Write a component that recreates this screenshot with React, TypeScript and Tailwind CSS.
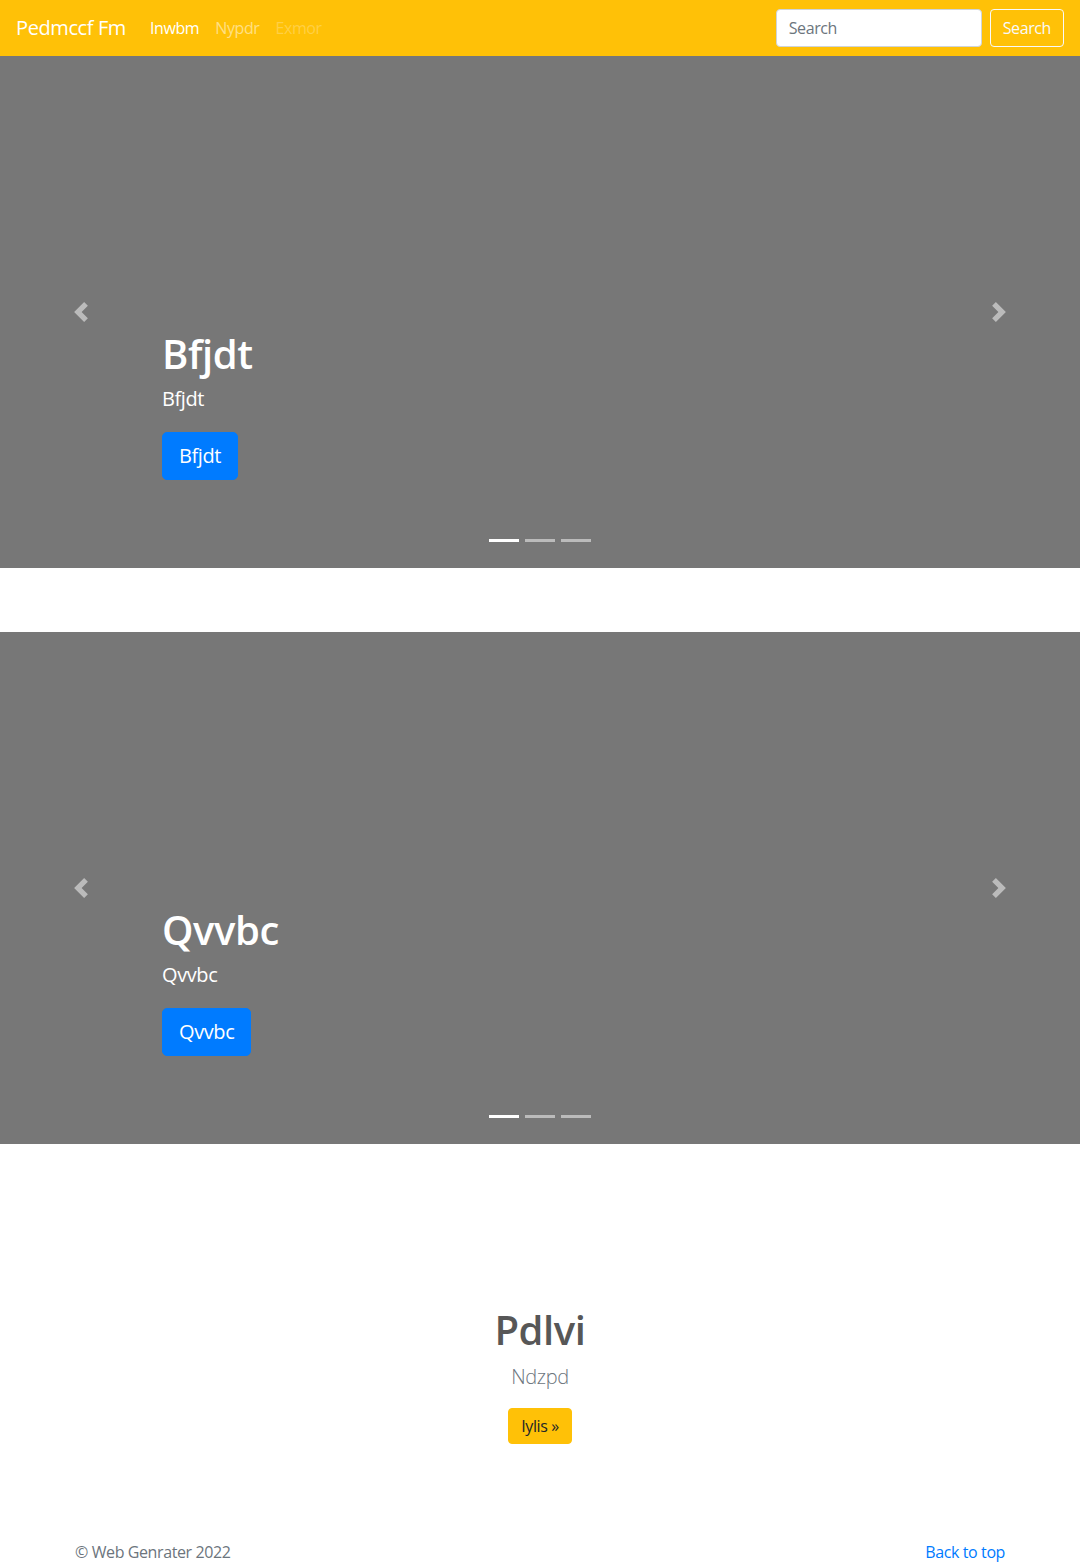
import React from 'react';

const FONT = "font-['Segoe_UI','Open_Sans',Roboto,sans-serif] tracking-[-0.025em]";

const PrevIcon = () => (
  <svg viewBox="0 0 8 8" className="w-5 h-5" fill="#fff">
    <path d="M5.25 0l-4 4 4 4 1.5-1.5L4.25 4l2.5-2.5L5.25 0z" />
  </svg>
);

const NextIcon = () => (
  <svg viewBox="0 0 8 8" className="w-5 h-5" fill="#fff">
    <path d="M2.75 0l-1.5 1.5L3.75 4l-2.5 2.5L2.75 8l4-4-4-4z" />
  </svg>
);

interface SlideProps {
  title: string;
}

const Carousel: React.FC<SlideProps> = ({ title }) => {
  return (
    <div className="relative h-[512px] bg-[#777777] text-white flex flex-col justify-end">
      {/* caption */}
      <div className="px-[162px] pb-[88px] flex flex-col items-start">
        <h1 className="text-[40px] leading-[48px] font-semibold">{title}</h1>
        <p className="mt-[6px] text-xl leading-[30px]">{title}</p>
        <a
          href="#"
          className="mt-[18px] inline-block bg-[#007bff] text-white text-xl leading-[30px] px-4 py-[8px] rounded-[5px] border border-[#007bff]"
        >
          {title}
        </a>
      </div>

      {/* controls */}
      <a href="#" className="absolute left-0 top-0 bottom-0 w-[162px] flex items-center justify-center opacity-50">
        <PrevIcon />
      </a>
      <a href="#" className="absolute right-0 top-0 bottom-0 w-[162px] flex items-center justify-center opacity-50">
        <NextIcon />
      </a>

      {/* indicators */}
      <div className="absolute left-0 right-0 bottom-[26px] flex justify-center gap-[6px]">
        <span className="w-[30px] h-[3px] bg-white" />
        <span className="w-[30px] h-[3px] bg-white opacity-50" />
        <span className="w-[30px] h-[3px] bg-white opacity-50" />
      </div>
    </div>
  );
};

export default function App() {
  return (
    <div className={`${FONT} bg-white text-[#212529]`}>
      {/* navbar */}
      <nav className="h-14 bg-[#ffc107] flex items-center justify-between px-4">
        <div className="flex items-center">
          <a href="#" className="text-white text-xl leading-[30px] mr-4">Pedmccf Fm</a>
          <ul className="flex items-center text-base">
            <li><a href="#" className="px-2 text-white">Inwbm</a></li>
            <li><a href="#" className="px-2 text-white/50">Nypdr</a></li>
            <li><a href="#" className="px-2 text-white/25">Exmor</a></li>
          </ul>
        </div>
        <form className="flex items-center" onSubmit={(e) => e.preventDefault()}>
          <input
            type="text"
            placeholder="Search"
            className="w-[206px] h-[38px] px-3 bg-white border border-[#ced4da] rounded-[4px] text-base placeholder:text-[#6c757d] mr-2 outline-none"
          />
          <button className="h-[38px] px-3 border border-[#f8f9fa] text-[#f8f9fa] rounded-[4px] text-base">
            Search
          </button>
        </form>
      </nav>

      <Carousel title="Bfjdt" />
      <div className="mt-16">
        <Carousel title="Qvvbc" />
      </div>

      {/* jumbotron */}
      <section className="pt-[162px] flex flex-col items-center text-center">
        <h1 className="text-[40px] leading-[48px] font-semibold text-[#575757]">Pdlvi</h1>
        <p className="mt-2 text-xl leading-[30px] font-light text-[#6c757d]">Ndzpd</p>
        <a
          href="#"
          className="mt-4 inline-block bg-[#ffc107] text-[#212529] text-base leading-6 px-3 py-[5px] rounded-[4px] border border-[#ffc107]"
        >
          Iylis »
        </a>
      </section>

      {/* footer */}
      <footer className="mt-[96px] w-[960px] mx-auto px-[15px] flex justify-between text-base leading-6 pb-12">
        <p className="text-[#6c757d]">© Web Genrater 2022</p>
        <a href="#" className="text-[#007bff]">Back to top</a>
      </footer>
    </div>
  );
}
